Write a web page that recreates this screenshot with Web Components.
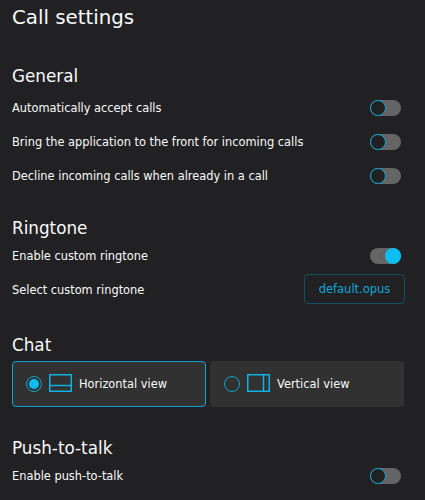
<!DOCTYPE html>
<html>
<head>
<meta charset="utf-8">
<style>
  html, body { margin: 0; padding: 0; height: 500px; overflow: hidden; background: #212124; }
  body { font-family: "DejaVu Sans", sans-serif; color: #fafafa; }
</style>
</head>
<body>
<call-settings>
  <settings-section heading="General" style="--section-top: 35px; --heading-gap: 4px">
    <setting-row label="Automatically accept calls"><toggle-switch></toggle-switch></setting-row>
    <setting-row label="Bring the application to the front for incoming calls"><toggle-switch></toggle-switch></setting-row>
    <setting-row label="Decline incoming calls when already in a call"><toggle-switch></toggle-switch></setting-row>
  </settings-section>
  <settings-section heading="Ringtone" style="--section-top: 24px">
    <setting-row label="Enable custom ringtone"><toggle-switch checked></toggle-switch></setting-row>
    <setting-row label="Select custom ringtone" style="min-height: 33px"><file-button>default.opus</file-button></setting-row>
  </settings-section>
  <settings-section heading="Chat" style="--section-top: 28px">
    <div style="display:flex;gap:4px;padding-top:5px">
      <view-card selected layout="horizontal">Horizontal view</view-card>
      <view-card layout="vertical">Vertical view</view-card>
    </div>
  </settings-section>
  <settings-section heading="Push-to-talk" style="--section-top: 30px">
    <setting-row label="Enable push-to-talk"><toggle-switch></toggle-switch></setting-row>
  </settings-section>
</call-settings>
<script>
class CallSettings extends HTMLElement {
  constructor() {
    super();
    this.attachShadow({ mode: "open" });
    this.shadowRoot.innerHTML = `
    <style>
      :host { display: block; padding: 0 21px 0 12px; }
      h1 { margin: 0; padding-top: 6px; font-size: 19.8px; line-height: 24px; font-weight: 400; }
    </style>
    <h1>Call settings</h1>
    <slot></slot>`;
  }
}

class SettingsSection extends HTMLElement {
  constructor() {
    super();
    this.attachShadow({ mode: "open" });
  }
  connectedCallback() {
    this.shadowRoot.innerHTML = `
    <style>
      :host { display: block; padding-top: var(--section-top, 24px); }
      h2 { margin: 0 0 var(--heading-gap, 0); font-size: 16.8px; line-height: 22px; font-weight: 400; }
    </style>
    <h2>${this.getAttribute("heading")}</h2>
    <slot></slot>`;
  }
}

class SettingRow extends HTMLElement {
  constructor() {
    super();
    this.attachShadow({ mode: "open" });
  }
  connectedCallback() {
    this.shadowRoot.innerHTML = `
    <style>
      :host { display: flex; align-items: center; justify-content: space-between; min-height: 34px; font-size: 11.4px; }
    </style>
    <span>${this.getAttribute("label")}</span>
    <slot></slot>`;
  }
}

class ToggleSwitch extends HTMLElement {
  constructor() {
    super();
    this.attachShadow({ mode: "open" });
    this.shadowRoot.innerHTML = `
    <style>
      :host { display: block; width: 31px; height: 16px; border-radius: 8px; background: #656565; position: relative; margin-right: 3px; }
      .knob { position: absolute; left: 0; top: 0; box-sizing: border-box; width: 16px; height: 16px; border-radius: 50%; border: 1.5px solid #0ea5d0; background: #212124; }
      :host([checked]) .knob { left: 15px; border: 0; background: #0dbdf2; }
    </style>
    <div class="knob"></div>`;
  }
}

class FileButton extends HTMLElement {
  constructor() {
    super();
    this.attachShadow({ mode: "open" });
    this.shadowRoot.innerHTML = `
    <style>
      :host { display: flex; align-items: center; justify-content: center; box-sizing: border-box; width: 101px; height: 30px; margin: 0 -1px 1px 0; border: 1px solid #134f62; border-radius: 4px; color: #12a6d4; font-size: 11.5px; }
    </style>
    <slot></slot>`;
  }
}

class ViewCard extends HTMLElement {
  constructor() {
    super();
    this.attachShadow({ mode: "open" });
  }
  connectedCallback() {
    const divider = this.getAttribute("layout") === "horizontal"
      ? `<path d="M0.75 11.5H22.25"/>` : `<path d="M16.5 0.75V17.25"/>`;
    this.shadowRoot.innerHTML = `
    <style>
      :host { display: flex; align-items: center; box-sizing: border-box; flex: none; width: 194px; height: 46px; padding-left: 14px; border-radius: 4px; background: #313131; font-size: 11.4px; }
      :host([selected]) { border: 1px solid #0ea5d0; padding-left: 13px; }
      .radio { box-sizing: border-box; width: 16px; height: 16px; border-radius: 50%; border: 1.5px solid #0ea5d0; display: flex; align-items: center; justify-content: center; margin-bottom: 1px; }
      :host([selected]) .radio::after { content: ""; width: 10px; height: 10px; border-radius: 50%; background: #0dbdf2; }
      svg { margin: 0 8px 2px 7px; display: block; }
      .label { margin-left: -1px; margin-bottom: 1px; }
    </style>
    <div class="radio"></div>
    <svg width="23" height="18" viewBox="0 0 23 18" fill="none" stroke="#0eb2e2" stroke-width="1.5"><rect x="0.75" y="0.75" width="21.5" height="16.5"/>${divider}</svg>
    <span class="label"><slot></slot></span>`;
  }
}

customElements.define("call-settings", CallSettings);
customElements.define("settings-section", SettingsSection);
customElements.define("setting-row", SettingRow);
customElements.define("toggle-switch", ToggleSwitch);
customElements.define("file-button", FileButton);
customElements.define("view-card", ViewCard);
</script>
</body>
</html>
